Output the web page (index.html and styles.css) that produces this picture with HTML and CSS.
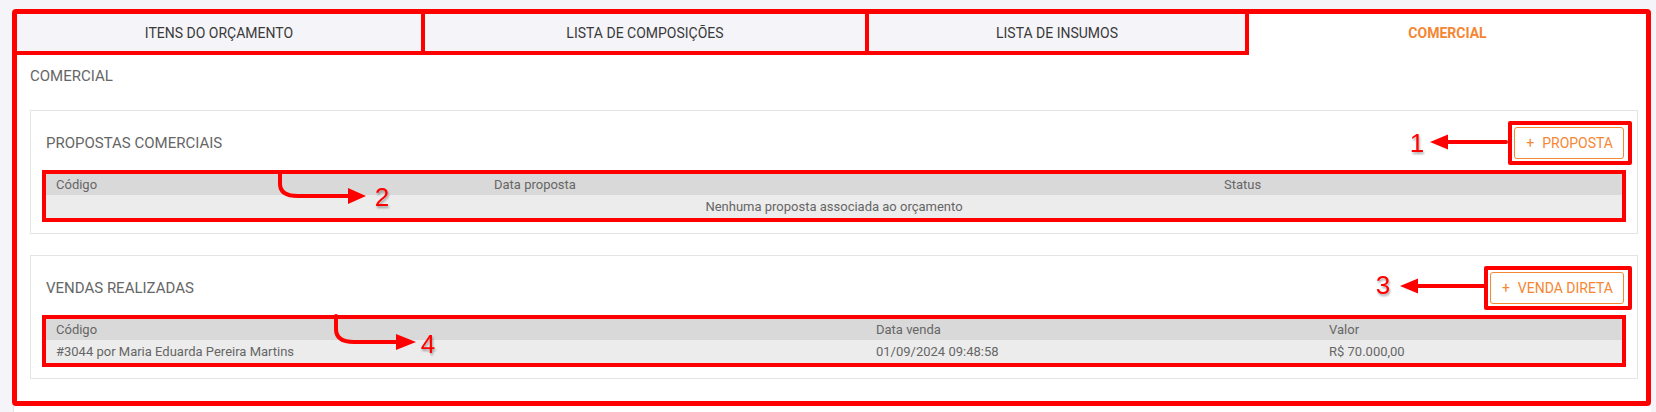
FILE: index.html
```html
<!DOCTYPE html>
<html lang="pt-BR">
<head>
<meta charset="utf-8">
<title>Comercial</title>
<link rel="stylesheet" href="styles.css">
</head>
<body>
<div class="frame">
  <nav class="tabs">
    <div class="tab tab-1">ITENS DO ORÇAMENTO</div>
    <div class="tab tab-2">LISTA DE COMPOSIÇÕES</div>
    <div class="tab tab-3">LISTA DE INSUMOS</div>
    <div class="tab tab-active">COMERCIAL</div>
  </nav>
  <section class="content">
    <h2 class="page-title">COMERCIAL</h2>

    <div class="card">
      <div class="card-head">
        <h3 class="card-title">PROPOSTAS COMERCIAIS</h3>
        <span class="mark-btn"><button class="btn"><span class="plus">+</span>PROPOSTA</button></span>
      </div>
      <div class="mark">
        <table class="grid">
          <colgroup>
            <col class="c-438"><col class="c-730"><col>
          </colgroup>
          <thead>
            <tr><th>Código</th><th>Data proposta</th><th>Status</th></tr>
          </thead>
          <tbody>
            <tr><td colspan="3" class="empty">Nenhuma proposta associada ao orçamento</td></tr>
          </tbody>
        </table>
      </div>
    </div>

    <div class="card card-2">
      <div class="card-head">
        <h3 class="card-title">VENDAS REALIZADAS</h3>
        <span class="mark-btn"><button class="btn"><span class="plus">+</span>VENDA DIRETA</button></span>
      </div>
      <div class="mark">
        <table class="grid">
          <colgroup>
            <col class="c-820"><col class="c-453"><col>
          </colgroup>
          <thead>
            <tr><th>Código</th><th>Data venda</th><th>Valor</th></tr>
          </thead>
          <tbody>
            <tr><td>#3044 por Maria Eduarda Pereira Martins</td><td>01/09/2024 09:48:58</td><td>R$ 70.000,00</td></tr>
          </tbody>
        </table>
      </div>
    </div>
  </section>
</div>
<div class="rest"></div>

<svg class="notes" width="1656" height="412" viewBox="0 0 1656 412" xmlns="http://www.w3.org/2000/svg">
  <defs>
    <filter id="sh" x="-50%" y="-50%" width="200%" height="200%">
      <feDropShadow dx="1" dy="2" stdDeviation="1.2" flood-color="#000" flood-opacity="0.35"/>
    </filter>
  </defs>
  <g fill="none" stroke="#ff0000" stroke-width="4" stroke-linecap="round" stroke-linejoin="round">
    <path d="M1506 142 L1444 142"/>
    <path d="M1484 286 L1416 286"/>
    <path d="M280 172 L280 184 Q280 196 298 196 L352 196"/>
    <path d="M336 316 L336 329 Q336 342 354 342 L400 342"/>
  </g>
  <g fill="#ff0000">
    <polygon points="1430,142 1448,134.5 1448,149.5"/>
    <polygon points="1400,286 1418,278.5 1418,293.5"/>
    <polygon points="366,196 348,188 348,204"/>
    <polygon points="416,342 396,334 396,350"/>
  </g>
  <g class="num" fill="#ff0000" filter="url(#sh)" text-anchor="middle">
    <text x="1417" y="152">1</text>
    <text x="382" y="206">2</text>
    <text x="1383" y="294">3</text>
    <text x="428" y="353">4</text>
  </g>
</svg>
</body>
</html>
```
FILE: styles.css
```css
* { box-sizing: border-box; }

html, body { margin: 0; }

body {
  background: #f5f5f9;
  padding: 9px 5px 0 12px;
  font-family: Roboto, "Liberation Sans", Arial, sans-serif;
  color: #666;
  overflow: hidden;
}

.frame {
  border: 5px solid #ff0000;
  border-radius: 4px;
  background: #fff;
}

.tabs {
  display: flex;
  height: 41px;
}

.tab {
  display: flex;
  align-items: center;
  justify-content: center;
  font-size: 14px;
  color: #3a3a3a;
  background: #f5f5f9;
  border-right: 4px solid #ff0000;
  border-bottom: 4px solid #ff0000;
}

.tab-1 { width: 408px; }
.tab-2 { width: 444px; }
.tab-3 { width: 380px; }

.tab-active {
  flex: 1;
  background: #fff;
  border: 0;
  color: #f58634;
  font-weight: 700;
  padding-bottom: 4px;
}

.content {
  padding: 13px 8px 22px 13px;
}

.page-title {
  margin: 0 0 26px;
  font-size: 15px;
  line-height: 16px;
  font-weight: 400;
  color: #666;
}

.card {
  border: 1px solid #e4e4e4;
  padding: 0 15px 15px 15px;
}

.card-2 { margin-top: 21px; }

.card-head {
  display: flex;
  justify-content: space-between;
  align-items: center;
  padding-top: 16px;
  margin-bottom: 15px;
}

.card-title {
  margin: 0;
  font-size: 15px;
  font-weight: 400;
  color: #666;
  line-height: 16px;
}

.mark-btn {
  display: inline-flex;
  border: 4px solid #ff0000;
  border-radius: 2px;
  padding: 2px 4px 2px 2px;
  margin: -6px -10px -6px 0;
}

.btn {
  display: inline-flex;
  align-items: center;
  height: 32px;
  padding: 0 10px 0 11px;
  border: 1px solid #f58634;
  border-radius: 3px;
  background: #fff;
  color: #f58634;
  font-family: Roboto, "Liberation Sans", Arial, sans-serif;
  font-size: 14px;
}

.plus {
  margin-right: 8px;
}

.mark {
  outline: 4px solid #ff0000;
  outline-offset: 0;
}

.grid {
  width: 100%;
  border-collapse: collapse;
  table-layout: fixed;
  font-size: 13px;
  color: #666;
}

.c-438 { width: 438px; }
.c-730 { width: 730px; }
.c-820 { width: 820px; }
.c-453 { width: 453px; }

.grid th {
  background: #d9d9d9;
  font-weight: 400;
  text-align: left;
  padding: 3px 10px 3px;
  line-height: 15px;
}

.grid td {
  background: #ececec;
  padding: 4px 10px 4px;
  line-height: 15px;
  white-space: nowrap;
}

.grid td.empty { text-align: center; }

.rest {
  height: 20px;
  margin-left: 1px;
  background: #fff;
  border-left: 1px solid #e4e4e4;
}

.notes {
  position: absolute;
  top: 0;
  left: 0;
  pointer-events: none;
}

.num text {
  font-family: "Liberation Sans", Arial, sans-serif;
  font-size: 26px;
}
```
